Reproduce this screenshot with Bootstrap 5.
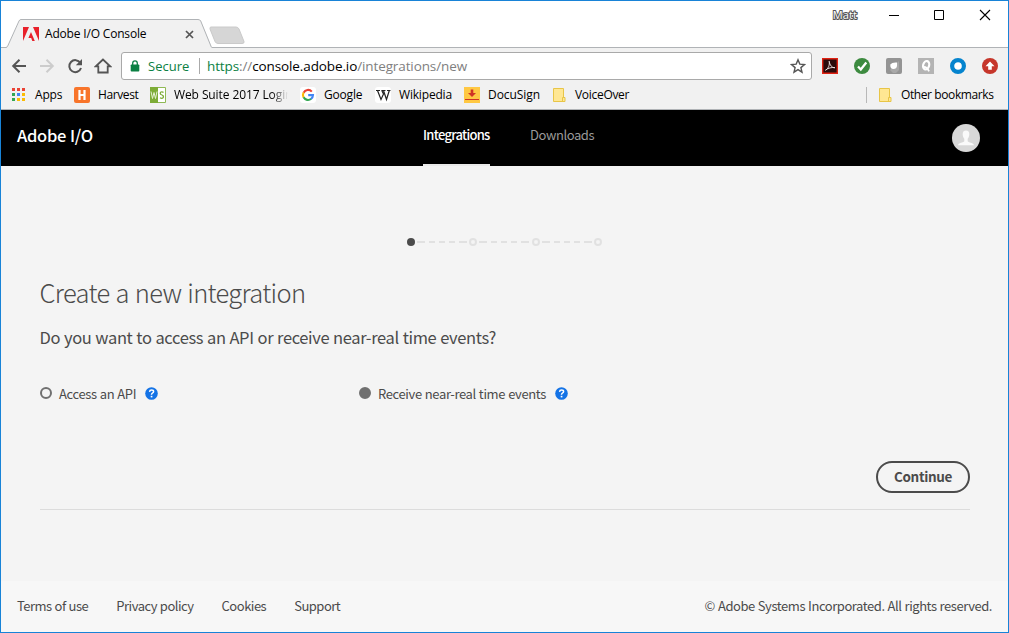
<!DOCTYPE html>
<html lang="en">
<head>
<meta charset="utf-8">
<title>Adobe I/O Console</title>
<link rel="stylesheet" href="https://cdn.jsdelivr.net/npm/bootstrap@5.3.0/dist/css/bootstrap.min.css">
<script src="https://cdn.jsdelivr.net/npm/bootstrap@5.3.0/dist/js/bootstrap.bundle.min.js"></script>
<style>
  body { margin: 0; overflow: hidden; }
  .window { width: 1009px; height: 633px; border: 1px solid #1883d7; background: #fff; }
  .window svg { display: block; flex: none; }

  /* browser frame */
  .chrome-ui { font: 12px/16px "Open Sans", "Noto Sans", sans-serif; color: #000; letter-spacing: -.18px; }
  .titlebar { height: 47px; }
  .tab { width: 208px; height: 30px; margin-top: 17px; margin-left: 5px; }
  .tab > .tab-shape { position: absolute; inset: 0; }
  .tab-body { padding: 2px 0 0 17px; }
  .tab-name { width: 140px; margin-left: 6px; letter-spacing: -.18px; }
  .new-tab { margin: 25px 0 0 -6px; }
  .win-btns { margin: 4px 17px 0 auto; height: 20px; }
  .profile { font-size: 11px; color: #fff; -webkit-text-stroke: 2px #555; paint-order: stroke fill; margin-right: 32px; letter-spacing: .1px; }
  .toolbar { height: 62px; background: #f1f1f1; border-bottom: 1px solid #b0b3b6; }
  .nav-icons { width: 120px; padding-left: 10px; gap: 12px; }
  .nav-icons svg:last-child { margin-left: -1px; }
  .omnibox { width: 691px; height: 28px; background: #fff; border: 1px solid #a9a9a9; border-radius: 3px; font-size: 13.5px; padding: 0 5px 0 8px; }
  .secure { color: #0b8043; font-size: 13px; letter-spacing: 0; width: 41px; margin-left: 8px; }
  .omni-sep { width: 1px; height: 16px; background: #aaa; margin: 0 7px 0 10px; }
  .url { letter-spacing: -.11px; color: #808080; }
  .url b { font-weight: 400; color: #000; }
  .url i { font-style: normal; color: #0b8043; }
  .extensions { gap: 16px; margin-left: 10px; }
  .bookmarks { height: 30px; padding-left: 10px; }
  .bookmarks .bm-text { margin-left: 7px; white-space: nowrap; }
  .fade-end { -webkit-mask-image: linear-gradient(90deg, #000 86%, transparent); }
  .bm-sep { width: 1px; height: 16px; background: #b8b8b8; }

  /* page */
  .page { font: 13px/20px "Noto Sans CJK SC", "Open Sans", sans-serif; letter-spacing: -.38px; word-spacing: .5px; color: #4b4b4b; }
  .site-header { height: 56px; background: #000; padding: 0 27px 0 16px; }
  .brand { width: 406px; font-size: 16.5px; font-weight: 500; color: #fff; letter-spacing: -.3px; padding-top: 15px; }
  .site-header .top-link { padding: 15px 0 0; color: #999; letter-spacing: -.42px; height: 56px; white-space: nowrap; }
  .site-header .top-link.active { width: 67px; font-weight: 500; color: #fff; letter-spacing: -.72px; border-bottom: 2px solid #eaeaea; margin-right: 40px; }
  .site-main { height: 415px; background: #f4f4f4; padding: 71px 38px 0 39px; }
  .steps { margin-left: 366px; }
  .site-main h1 { font-size: 25.5px; font-weight: 300; line-height: 40px; letter-spacing: -.68px; word-spacing: 1px; margin: 25px 0 0 -.5px; }
  .site-main h2 { font-size: 16.5px; font-weight: 400; line-height: 26px; letter-spacing: -.36px; margin: 12px 0 0 -.5px; }
  .choices { margin-top: 33px; height: 20px; }
  .choice { width: 319px; }
  .choice-text { padding-top: 2px; letter-spacing: -.37px; }
  .dot { width: 12px; height: 12px; border: 2px solid #707070; border-radius: 50%; margin-right: 7px; }
  .dot.on { background: #707070; }
  .choice svg { margin-left: 9px; }
  .actions { margin-top: 58px; padding-bottom: 16px; border-bottom: 1px solid #dcdcdc; }
  .btn-continue { width: 94px; height: 32px; border: 2px solid #4b4b4b; border-radius: 16px; font-size: 13.5px; line-height: 20px; font-weight: 700; letter-spacing: -.35px; color: #4b4b4b; padding: 0 0 2px; }
  .site-footer { height: 51px; background: #f7f7f7; padding: 0 16px 1px; letter-spacing: -.44px; white-space: nowrap; }
  .site-footer a { color: #6e6e6e; text-decoration: none; margin-right: 28px; letter-spacing: -.5px; }
</style>
</head>
<body>
<div class="window d-flex flex-column">
  <div class="chrome-ui">
    <div class="titlebar d-flex align-items-start">
      <div class="tab position-relative">
        <svg class="tab-shape" width="210" height="31" viewBox="0 0 210 31"><path d="M-5 29.5H1L13.5 3Q14.5 1.5 16 1.5H192Q194 1.5 195 3L206 29.5V31H0z" fill="#f1f1f1"/><path d="M0 29.5L1.500 28.500 13 3Q13.700 1.500 15 1.500H192Q194 1.500 194.700 3L205.500 29.500" fill="none" stroke="#b0b3b6"/></svg>
        <div class="tab-body d-flex align-items-center position-relative h-100">
          <svg width="16" height="16" viewBox="0 0 16 16"><path fill="#e8202a" d="M0 1h6L0 15zM10 1h6v14zM8 6l3.800 9H9.300L8.200 12H5.400z"/></svg>
          <span class="tab-name">Adobe I/O Console</span>
          <svg width="9" height="9" viewBox="0 0 9 9"><path d="M1 1l7 7M8 1L1 8" stroke="#555" stroke-width="1.700"/></svg>
        </div>
      </div>
      <svg class="new-tab" width="38" height="20" viewBox="0 0 38 20"><path d="M3 1H28Q30 1 31 3L36 15.500Q36.500 17.500 34 17.500H10Q8 17.500 7 15.500L2 3Q1.500 1 3 1z" fill="#d6d6d6" stroke="#cacaca"/></svg>
      <div class="win-btns d-flex align-items-center">
        <span class="profile">Matt</span>
        <svg width="102" height="12" viewBox="0 0 102 12"><path d="M0 6.500h10M45.500 1.500h9v9h-9z" fill="none" stroke="#000"/><path d="M91 1l10 10M101 1L91 11" stroke="#000" stroke-width="1.100"/></svg>
      </div>
    </div>
    <div class="border-top" style="border-color:#b0b3b6!important;margin-top:-1px"></div>
    <div class="toolbar">
      <div class="d-flex align-items-center pt-1">
        <div class="nav-icons d-flex align-items-center">
          <svg width="16" height="16" viewBox="0 0 16 16"><path d="M15 8H2.500M8.500 1.700L2.200 8l6.300 6.300" fill="none" stroke="#555" stroke-width="2"/></svg>
          <svg width="16" height="16" viewBox="0 0 16 16"><path d="M1 8h12.500M7.500 1.700L13.800 8l-6.300 6.300" fill="none" stroke="#ccc" stroke-width="2"/></svg>
          <svg width="16" height="16" viewBox="0 0 16 16"><path d="M13.300 4.800A6 6 0 1 0 14 10" fill="none" stroke="#555" stroke-width="2"/><path d="M15 1v6.200H8.800z" fill="#555"/></svg>
          <svg width="18" height="16" viewBox="0 0 18 16"><path d="M9 1.500L1.800 8.300H4.300V14.500H13.700V8.300H16.200z" fill="none" stroke="#555" stroke-width="1.800"/></svg>
        </div>
        <div class="omnibox d-flex align-items-center">
          <svg width="10" height="12" viewBox="0 0 10 12"><path d="M1.500 4.500h7q.8 0 .8.800v5.400q0 .8-.8.800h-7q-.8 0-.8-.8V5.300q0-.8.8-.8z" fill="#0b8043"/><path d="M2.700 5V3.200a2.300 2.300 0 0 1 4.600 0V5" fill="none" stroke="#0b8043" stroke-width="1.300"/></svg>
          <span class="secure">Secure</span><span class="omni-sep"></span>
          <span class="url"><i>https</i>://<b>console.adobe.io</b>/integrations/new</span>
          <svg class="ms-auto" width="16" height="16" viewBox="0 0 16 16"><path d="M8 1.800l1.800 4.300 4.700.4-3.600 3.100 1.100 4.600L8 11.700l-4 2.500 1.100-4.600L1.500 6.500l4.700-.4z" fill="none" stroke="#555" stroke-width="1.400"/></svg>
        </div>
        <div class="extensions d-flex align-items-center">
          <svg width="16" height="16" viewBox="0 0 16 16"><path d="M.7.7h14.600v14.600H.7z" fill="#2b0b0b" stroke="#e02213" stroke-width="1.400"/><path d="M3.500 12.200C6 11 8 7 7.200 3.300 7.700 7 10 10 13 9.700 10 9 6 10 3.500 12.200z" fill="none" stroke="#f2e6e6" stroke-width=".9"/></svg>
          <svg width="16" height="16" viewBox="0 0 16 16"><circle cx="8" cy="8" r="8" fill="#3c8a3f"/><path d="M4 8.500L6.800 11.500 12.300 4.500" fill="none" stroke="#fff" stroke-width="2.300"/></svg>
          <svg width="16" height="16" viewBox="0 0 16 16"><rect width="16" height="16" rx="2" fill="#949494"/><path d="M4 12L13 3v9l-3 3H7z" fill="#a9a9a9"/><path d="M4.300 6.500Q6 4 11 4.500V8Q10.500 11 7.500 11 4 11 4.300 6.500z" fill="#fff"/></svg>
          <svg width="16" height="16" viewBox="0 0 16 16"><path fill="#b4b4b4" d="M0 0h16v16H0z"/><ellipse cx="8.200" cy="7.200" rx="3" ry="4.300" transform="rotate(15 8 7)" fill="none" stroke="#fff" stroke-width="2.200"/><path d="M6 9q3 0 5 4.300" fill="none" stroke="#fff" stroke-width="1.800"/></svg>
          <svg width="16" height="16" viewBox="0 0 16 16"><circle cx="8" cy="8" r="5.900" fill="#fff" stroke="#0584ce" stroke-width="4.200"/></svg>
          <svg width="16" height="16" viewBox="0 0 16 16"><circle cx="8" cy="8" r="8" fill="#c6362b"/><path d="M8 3.500l4.500 4.800H9.800v3.500H6.200V8.300H3.500z" fill="#fff"/></svg>
        </div>
      </div>
      <div class="bookmarks d-flex align-items-center">
        <svg width="15" height="14" viewBox="0 0 15 14"><g fill="#ea4335"><path d="M1 0h3v3H1zM6 0h3v3H6zM11 0h3v3h-3z"/></g><path fill="#34a853" d="M1 5h3v3H1zM1 10h3v3H1z"/><path fill="#4285f4" d="M6 5h3v3H6z"/><path fill="#fbbc05" d="M11 5h3v3h-3zM6 10h3v3H6zM11 10h3v3h-3z"/></svg>
        <span class="bm-text" style="width:39px;margin-left:9px">Apps</span>
        <svg width="16" height="16" viewBox="0 0 16 16"><rect width="16" height="16" rx="2" fill="#f8752b"/><path d="M5.500 3v10M10.500 3v10M5 8h6" stroke="#fff" stroke-width="2.200"/></svg>
        <span class="bm-text" style="width:52px;letter-spacing:-.4px;margin-left:8px">Harvest</span>
        <svg width="16" height="16" viewBox="0 0 16 16"><path fill="#fff" stroke="#8fb955" d="M.5.500h15v15H.5z"/><path fill="#7dac37" d="M0 0h8v16H0z"/><path d="M1 4.500l1.500 7L4 5.500l1.500 6 1.500-7" fill="none" stroke="#e5f0d3"/><path d="M13.500 5.500Q12.500 4.500 11 5 9.500 6 11 7.500q3 1 2.300 3-1.300 1.500-3.300.2" fill="none" stroke="#7dac37" stroke-width="1.300"/></svg>
        <span class="bm-text fade-end" style="width:114px;margin-left:8px;margin-right:12px;letter-spacing:-.1px">Web Suite 2017 Login</span>
        <svg width="16" height="16" viewBox="0 0 16 16"><rect width="16" height="16" rx="3" fill="#fff"/><g fill="none" stroke-width="2.100"><path d="M11.800 4.600A5 5 0 0 0 3.600 5.700" stroke="#ea4335"/><path d="M3.600 5.500a5 5 0 0 0 0 5" stroke="#fbbc05"/><path d="M3.600 10.300a5 5 0 0 0 7.600 1.500" stroke="#34a853"/><path d="M11 12a5 5 0 0 0 2-3.900H8.200" stroke="#4285f4"/></g></svg>
        <span class="bm-text" style="width:51px;margin-left:8px">Google</span>
        <svg width="16" height="16" viewBox="0 0 16 16"><rect width="16" height="16" rx="3" fill="#fff"/><path d="M1 3.500h4M6.500 3.500h4M12 3.500h3.500" stroke="#222"/><path d="M2.500 3.500L6 12.500 8.500 7 6.800 3.500M8.500 3.500l3 9 2.800-9" fill="none" stroke="#222" stroke-width="1.200"/></svg>
        <span class="bm-text" style="width:65px;margin-left:8px">Wikipedia</span>
        <svg width="16" height="16" viewBox="0 0 16 16"><path fill="#ffc843" d="M0 0h16v16H0z"/><path d="M6.700 2.500h2.600V6H12L8 10 4 6h2.700z" fill="#cf3426"/><path d="M1 12.500h14" stroke="#cf3426"/></svg>
        <span class="bm-text" style="width:65px;margin-left:8px;letter-spacing:-.05px">DocuSign</span>
        <svg width="13" height="14" viewBox="0 0 13 14"><path d="M.5.500h10v9h1.500v4H.5z" fill="#ffe793" stroke="#e8c547"/><path d="M9.500 13V9.500h2" fill="none" stroke="#e8c547"/></svg>
        <span class="bm-text" style="margin-left:9px;letter-spacing:-.3px">VoiceOver</span>
        <span class="bm-sep ms-auto"></span>
        <svg style="margin-left:12px" width="13" height="14" viewBox="0 0 13 14"><path d="M.5.500h10v9h1.500v4H.5z" fill="#ffe793" stroke="#e8c547"/><path d="M9.500 13V9.500h2" fill="none" stroke="#e8c547"/></svg>
        <span class="bm-text" style="margin-left:9px;width:107px;letter-spacing:-.4px">Other bookmarks</span>
      </div>
    </div>
  </div>

  <div class="page">
    <header class="site-header d-flex">
      <span class="brand">Adobe I/O</span>
      <nav class="d-flex">
        <a class="top-link active text-decoration-none">Integrations</a>
        <a class="top-link text-decoration-none">Downloads</a>
      </nav>
      <svg class="ms-auto align-self-center" width="30" height="28" viewBox="0 0 30 28"><circle cx="15" cy="14" r="14" fill="#d8d8d8"/><path d="M15 6.500c2.300 0 3.500 1.500 3.300 4-.1 2-.8 3.300-1.600 4.300v2.400c.5 1.300 6.300 1.500 6.300 4H7c0-2.500 5.800-2.700 6.300-4v-2.400c-.8-1-1.500-2.300-1.600-4.300-.2-2.500 1-4 3.300-4z" fill="#fafafa"/></svg>
    </header>
    <main class="site-main">
      <svg class="steps" width="198" height="10" viewBox="0 0 198 10">
        <g stroke="#e1e1e1" stroke-width="2" fill="none"><path d="M11 5h51M73 5h51M136 5h51" stroke-dasharray="8 4 6 4 6 4 6 4 8 100"/><circle cx="67" cy="5" r="3"/><circle cx="130" cy="5" r="3"/><circle cx="192" cy="5" r="3"/></g>
        <circle cx="5" cy="5" r="4" fill="#4b4b4b"/>
      </svg>
      <h1>Create a new integration</h1>
      <h2>Do you want to access an API or receive near-real time events?</h2>
      <div class="choices d-flex">
        <label class="choice d-flex align-items-center"><span class="dot"></span><span class="choice-text">Access an API</span>
          <svg width="13" height="13" viewBox="0 0 13 13"><circle cx="6.500" cy="6.500" r="6.300" fill="#1473e6"/><path d="M4.500 4.800Q4.700 3 6.600 3q2 0 2 1.600 0 1-1.200 1.600-.9.500-.9 1.500" fill="none" stroke="#fff" stroke-width="1.500"/><path fill="#fff" d="M5.700 8.800h1.700v1.600H5.700z"/></svg></label>
        <label class="choice d-flex align-items-center"><span class="dot on"></span><span class="choice-text">Receive near-real time events</span>
          <svg width="13" height="13" viewBox="0 0 13 13"><circle cx="6.500" cy="6.500" r="6.300" fill="#1473e6"/><path d="M4.500 4.800Q4.700 3 6.600 3q2 0 2 1.600 0 1-1.200 1.600-.9.500-.9 1.500" fill="none" stroke="#fff" stroke-width="1.500"/><path fill="#fff" d="M5.700 8.800h1.700v1.600H5.700z"/></svg></label>
      </div>
      <div class="actions d-flex justify-content-end"><button class="btn btn-continue">Continue</button></div>
    </main>
    <footer class="site-footer d-flex align-items-center">
      <a>Terms of use</a><a>Privacy policy</a><a>Cookies</a><a>Support</a>
      <span class="ms-auto">© Adobe Systems Incorporated. All rights reserved.</span>
    </footer>
  </div>
</div>
</body>
</html>
